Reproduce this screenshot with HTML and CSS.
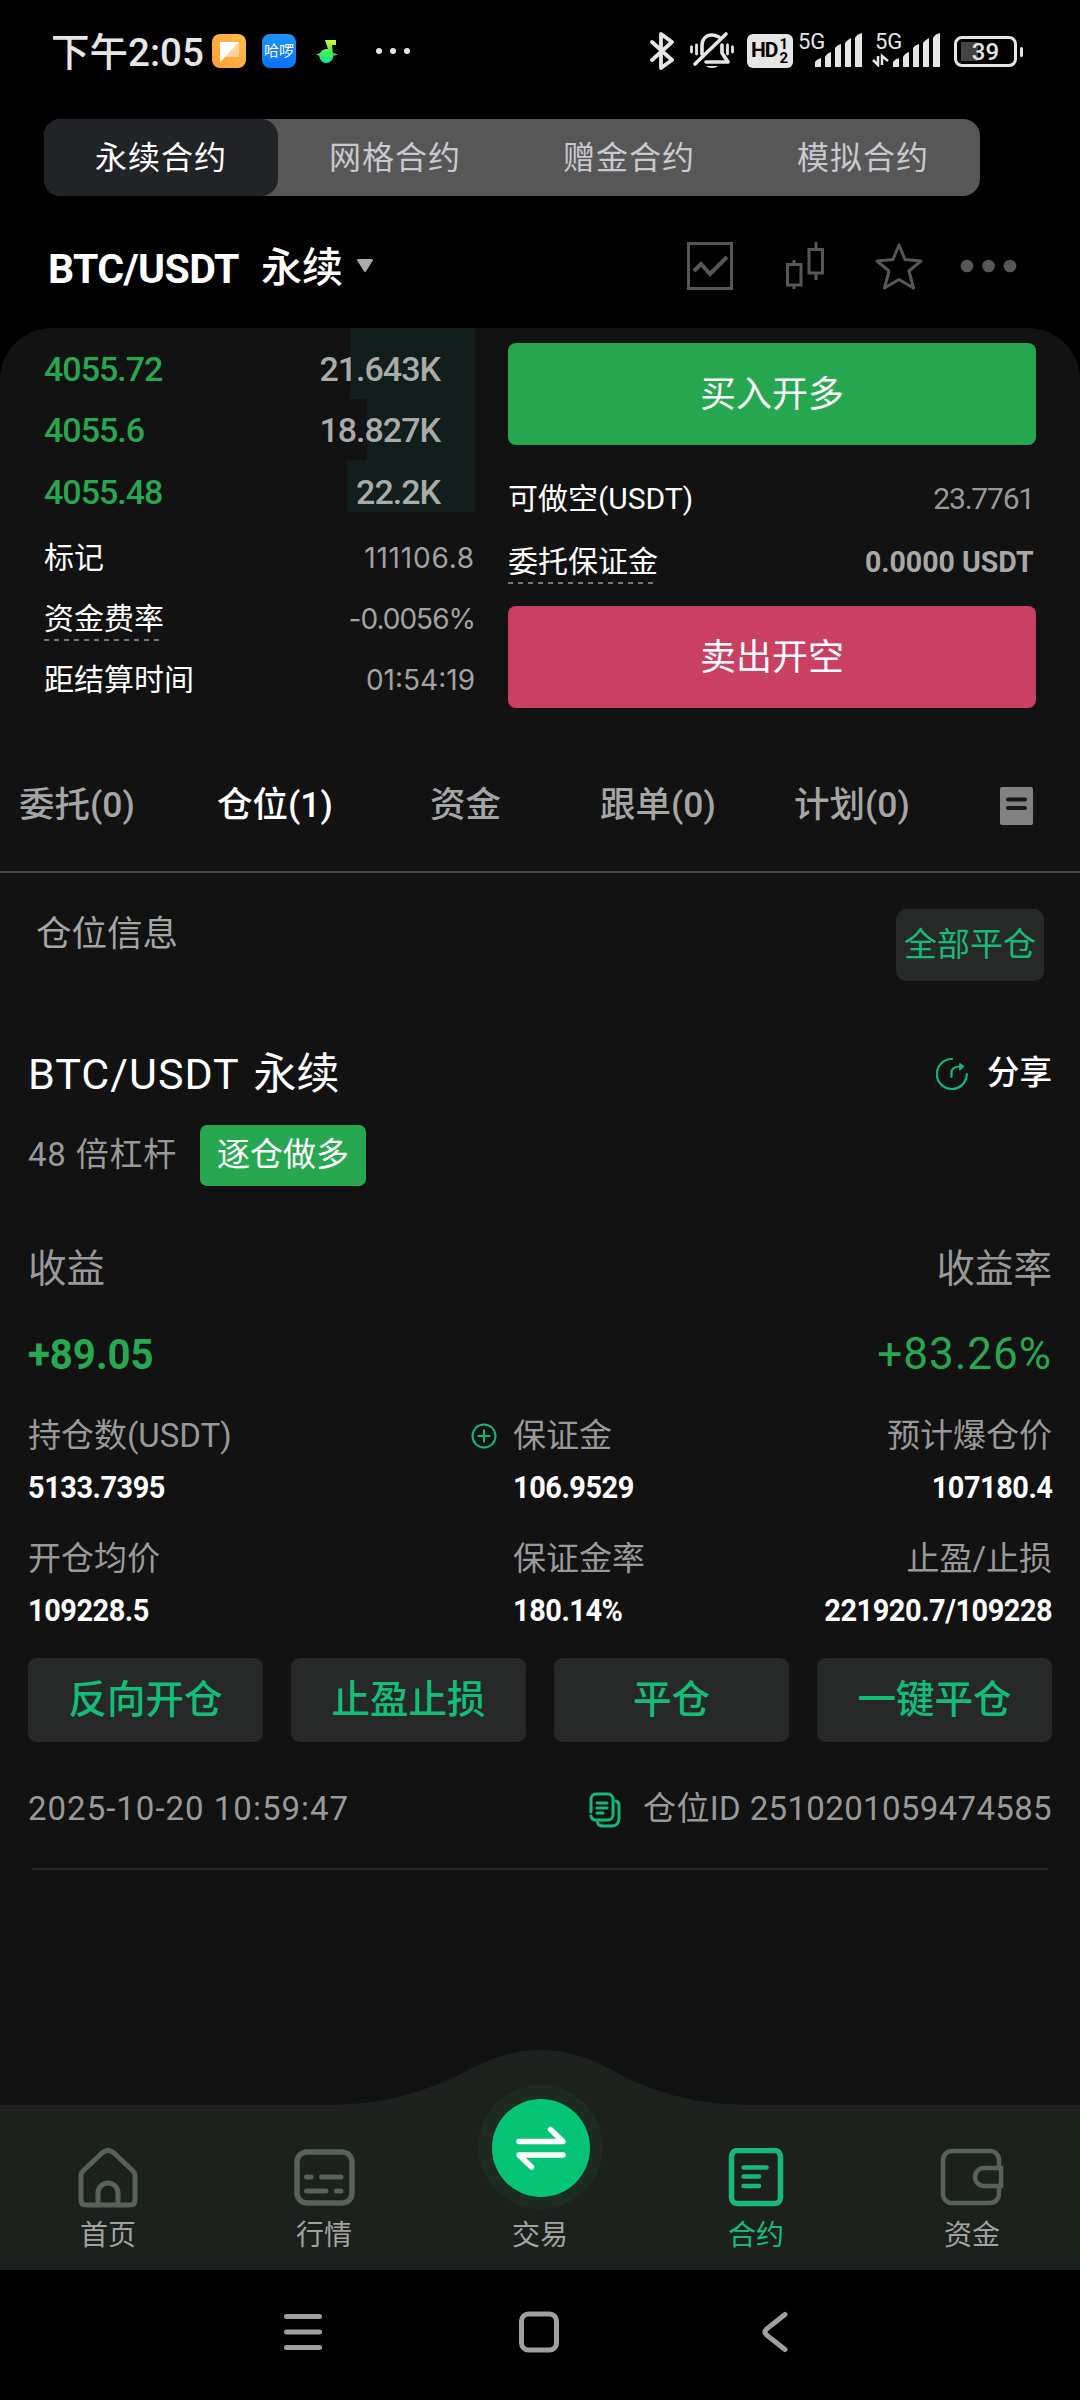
FILE: index.html
```html
<!DOCTYPE html>
<html lang="zh-CN">
<head>
  <meta charset="UTF-8" />
  <meta name="viewport" content="width=device-width, initial-scale=1.0" />
  <title>BTC/USDT 永续</title>
  <link rel="stylesheet" href="styles.css">
</head>
<body>
  <header class="status">
    <span class="clock">下午2:05</span>
    <svg class="app-icon" width="34" height="34" viewBox="0 0 34 34">
      <defs><linearGradient id="orange" x1="1" y1="0" x2="0" y2="1"><stop offset="0" stop-color="#ffc04a"/><stop offset="1" stop-color="#ff9d3c"/></linearGradient></defs>
      <rect width="34" height="34" rx="8" fill="url(#orange)"/>
      <path d="M8 8H27V23H13L8 28Z" fill="#ffd49b"/>
      <path d="M8 8H27L8 28Z" fill="#fff"/>
    </svg>
    <span class="app-icon hello">哈啰</span>
    <svg class="app-note" width="22" height="24" viewBox="0 0 22 24">
      <defs><linearGradient id="note" x1="0" y1="0" x2="0" y2="1"><stop offset="0" stop-color="#d8f535"/><stop offset="0.5" stop-color="#4df04c"/><stop offset="1" stop-color="#05e69a"/></linearGradient></defs>
      <path d="M9 1H20V6H16L17 15A7 7 0 1 1 10 10L12 10ZM0 15.500L4 14V17ZM22 15.500L17 14V17Z" fill="url(#note)"/>
    </svg>
    <svg width="36" height="8" viewBox="0 0 36 8" fill="#e6e6e6"><circle cx="5" cy="4" r="3"/><circle cx="19" cy="4" r="3"/><circle cx="33" cy="4" r="3"/></svg>
    <div class="status-right">
      <svg width="24" height="40" viewBox="0 0 24 40" fill="none" stroke="#e6e6e6" stroke-width="3.800" stroke-linejoin="round" stroke-linecap="round"><path d="M2 11L22 29L11 37V3L22 11L2 29"/></svg>
      <svg class="bell" width="44" height="40" viewBox="0 0 44 40" fill="none" stroke="#e6e6e6" stroke-width="3.600" stroke-linecap="round" stroke-linejoin="round">
        <path d="M12 23V15C12 8 16 4 22 4C25 4 27 5 29 6M32 14V22L38 31H16"/>
        <path d="M36 3L5 33"/>
        <path d="M1.500 16V21M6.500 14V23M42.500 16V21M37.500 14V23" stroke-width="2.800"/>
        <path d="M16 35H28A7 4 0 0 1 16 35Z" fill="#e6e6e6" stroke="none"/>
      </svg>
      <span class="hd">HD<span class="hd-num"><i>1</i><i>2</i></span></span>
      <span class="signal">
        <span class="net">5G</span>
        <svg width="64" height="36" viewBox="0 0 64 36" fill="#e6e6e6"><path d="M17 36V31Q19 28 23 27V36ZM27 36V26Q29 22 33 21V36ZM37 36V17Q39 14 43 13V36ZM47 36V12Q49 9 53 7V36ZM57 36V7Q59 3 64 2V36Z"/></svg>
      </span>
      <span class="signal second">
        <span class="net">5G</span>
        <svg width="68" height="36" viewBox="-4 0 68 36" fill="#e6e6e6"><path d="M17 36V31Q19 28 23 27V36ZM27 36V26Q29 22 33 21V36ZM37 36V17Q39 14 43 13V36ZM47 36V12Q49 9 53 7V36ZM57 36V7Q59 3 64 2V36Z"/><path d="M-3 29L2 34V25M6 34V25L12 30" fill="none" stroke="#e6e6e6" stroke-width="2.500"/></svg>
      </span>
      <span class="battery"><span>39</span></span>
    </div>
  </header>

  <nav class="segments">
    <a class="active">永续合约</a><a>网格合约</a><a>赠金合约</a><a>模拟合约</a>
  </nav>

  <div class="pair-bar">
    <h1><span class="din pair-name">BTC/USDT</span><span class="pair-type">永续</span></h1>
    <svg class="caret" width="18" height="14" viewBox="0 0 18 14"><path d="M2 1H16L9 12Z" fill="#aaa" stroke="#aaa" stroke-width="2" stroke-linejoin="round"/></svg>
    <div class="tools">
      <svg width="46" height="48" viewBox="0 0 46 48" fill="none" stroke="#575757" stroke-width="3"><path d="M1.500 1.500H44.500V46.500H1.500Z"/><path d="M7 29L14 22L23 32L40 15" stroke-width="4"/></svg>
      <svg class="candles" width="38" height="48" viewBox="0 0 38 48" fill="none" stroke="#575757" stroke-width="3"><path d="M1.500 22.500H15V43H1.500ZM8 18V22M8 43V47M23 7.500H36.500V31H23ZM30 0V7M30 31V38"/></svg>
      <svg class="star" width="48" height="48" viewBox="0 0 48 48" fill="none" stroke="#575757" stroke-width="3" stroke-linejoin="round"><path d="M24 3L30 17.500L46 19L34 29L38.500 46L24 37.500L9.500 46L14 29L2 19L18 17.500Z"/></svg>
      <svg width="58" height="14" viewBox="0 0 58 14" fill="#575757"><circle cx="8" cy="7" r="6.300"/><circle cx="29.500" cy="7" r="6.300"/><circle cx="51" cy="7" r="6.300"/></svg>
    </div>
  </div>

  <main>
    <section class="trade">
      <div class="book">
        <div class="ask first"><b class="depth" style="width:125px"></b><span>4055.72</span><span>21.643K</span></div>
        <div class="ask"><b class="depth" style="width:108px"></b><span>4055.6</span><span>18.827K</span></div>
        <div class="ask last"><b class="depth" style="width:128px"></b><span>4055.48</span><span>22.2K</span></div>
        <div class="info"><span>标记</span><span class="wide v1">111106.8</span></div>
        <div class="info"><span class="dashed">资金费率</span><span class="wide v2">-0.0056%</span></div>
        <div class="info"><span>距结算时间</span><span class="wide v3">01:54:19</span></div>
      </div>
      <div class="order">
        <button class="buy">买入开多</button>
        <div class="avail"><span>可做空(USDT)</span><span class="num">23.7761</span></div>
        <div class="margin"><span class="dashed">委托保证金</span><span class="din num">0.0000 USDT</span></div>
        <button class="sell">卖出开空</button>
      </div>
    </section>

    <nav class="tabs">
      <a>委托(0)</a>
      <a class="active">仓位(1)</a>
      <a>资金</a>
      <a>跟单(0)</a>
      <a>计划(0)</a>
      <svg width="34" height="38" viewBox="0 0 34 38"><rect width="33" height="38" rx="2" fill="#828282"/><path d="M8 12.500H25M8 21H25" stroke="#171717" stroke-width="4" stroke-linecap="round"/></svg>
    </nav>

    <div class="list-head">
      <span>仓位信息</span>
      <button>全部平仓</button>
    </div>

    <section class="position">
      <div class="title">
        <h2><span>BTC/USDT</span> 永续</h2>
        <a class="share">
          <svg width="32" height="34" viewBox="0 0 32 34" fill="none" stroke="#13b877" stroke-width="2.200" stroke-linecap="round"><path d="M16 2A15 15 0 1 0 30.800 17"/><path d="M15.500 20V16C15.500 12 18 9.500 24 9.500"/><path d="M24 6.500L28 9.500L24 13Z" fill="#13b877" stroke-width="1"/></svg>
          分享
        </a>
      </div>
      <div class="leverage"><span>48 倍杠杆</span><b>逐仓做多</b></div>
      <div class="pnl-label"><span>收益</span><span>收益率</span></div>
      <div class="pnl"><span class="din">+89.05</span><span class="rate">+83.26%</span></div>
      <div class="stats">
        <div><label>持仓数<i>(USDT)</i></label><b>5133.7395</b></div>
        <div class="mid">
          <svg class="add" width="26" height="26" viewBox="0 0 26 26" fill="none" stroke="#13b877" stroke-width="2"><circle cx="13" cy="13" r="11.500"/><path d="M13 6.500V19.500M6.500 13H19.500"/></svg>
          <label>保证金</label><b>106.9529</b>
        </div>
        <div class="end"><label>预计爆仓价</label><b>107180.4</b></div>
        <div><label>开仓均价</label><b>109228.5</b></div>
        <div class="mid"><label>保证金率</label><b>180.14%</b></div>
        <div class="end"><label>止盈/止损</label><b>221920.7/109228</b></div>
      </div>
      <div class="actions">
        <button>反向开仓</button>
        <button>止盈止损</button>
        <button>平仓</button>
        <button>一键平仓</button>
      </div>
      <div class="meta">
        <time>2025-10-20 10:59:47</time>
        <span class="pid">
          <svg width="32" height="36" viewBox="0 0 32 36" fill="none" stroke="#13b877" stroke-width="3" stroke-linecap="round"><path d="M2 20V7A5 5 0 0 1 7 2H19A5 5 0 0 1 24 7V23A5 5 0 0 1 19 28H7A5 5 0 0 1 2 24"/><path d="M8 11H18M8 16H18M8 21H14"/><path d="M27 9Q30 10 30 14V27A7 7 0 0 1 23 34H14Q9 34 8.500 30"/></svg>
          <span>仓位ID <em>2510201059474585</em></span>
        </span>
      </div>
    </section>
  </main>

  <footer class="tabbar">
    <svg class="bump" width="1080" height="220" viewBox="0 0 1080 220">
      <path d="M0 55H330C380 54 415 45 455 27C480 14 505 0 540 0C575 0 600 13 625 27C665 46 700 54 750 55H1080V220H0Z" fill="#1d211d"/>
      <circle cx="540.500" cy="97" r="62" fill="#1d2b20"/>
    </svg>
    <a>
      <svg width="60" height="60" viewBox="0 0 60 60" fill="none" stroke="#566356" stroke-width="5"><path d="M3 27Q3 25 5 23L24 5Q30 0 36 5L55 23Q57 25 57 27V52Q57 57 52 57H8Q3 57 3 52Z"/><path d="M20 57V45A10 10 0 0 1 40 45V57"/></svg>
      首页
    </a>
    <a>
      <svg width="62" height="60" viewBox="0 0 62 60" fill="none" stroke="#566356" stroke-width="5.500"><rect x="4" y="4" width="55" height="51" rx="10"/><path d="M13.500 29H18M28.500 29H48M13.500 43H33M43.500 43H48" stroke-linecap="round" stroke-width="5"/></svg>
      行情
    </a>
    <a>
      <svg class="swap" width="98" height="98" viewBox="0 0 98 98"><circle cx="49" cy="49" r="49" fill="#06c475"/><path d="M27 42.500H71L58.500 30.500M71 56H27L39.500 68" fill="none" stroke="#fff" stroke-width="5.500" stroke-linecap="round" stroke-linejoin="round"/></svg>
      交易
    </a>
    <a class="active">
      <svg width="56" height="60" viewBox="0 0 56 60" fill="none" stroke="#18b978" stroke-width="5.500"><rect x="3.500" y="2.500" width="49" height="53" rx="6"/><path d="M15.500 19.500H38.500M15.500 28.500H31M15.500 38H31" stroke-linecap="round" stroke-width="4.500"/></svg>
      合约
    </a>
    <a>
      <svg width="64" height="60" viewBox="0 0 64 60" fill="none" stroke="#566356" stroke-width="4.500"><path d="M59 20V12A9 9 0 0 0 50 3H12A9 9 0 0 0 3 12V46A9 9 0 0 0 12 55H50A9 9 0 0 0 59 46V38"/><path d="M61 20H44A8.500 8.500 0 0 0 44 38H61Z"/></svg>
      资金
    </a>
  </footer>

  <div class="sysnav">
    <svg width="40" height="40" viewBox="0 0 40 40" stroke="#a0a0a0" stroke-width="5" stroke-linecap="round"><path d="M3.500 4.500H36.500M3.500 20H36.500M3.500 35.500H36.500"/></svg>
    <svg width="40" height="42" viewBox="0 0 40 42" fill="none" stroke="#a0a0a0" stroke-width="5"><rect x="2.500" y="3" width="35" height="36" rx="7"/></svg>
    <svg width="40" height="42" viewBox="0 0 40 42" fill="none" stroke="#a0a0a0" stroke-width="5" stroke-linecap="round"><path d="M30 3.500L11.500 18Q8.500 21 11.500 24L30 38.500"/></svg>
  </div>
</body>
</html>
```
FILE: styles.css
```css
* {
  box-sizing: border-box;
}
body {
  margin: 0;
  width: 1080px;
  height: 2400px;
  overflow: hidden;
  background: #000;
  color: #fff;
  display: flex;
  flex-direction: column;
  font-family: Roboto, "Noto Sans CJK SC", sans-serif;
  font-size: 33px;
  line-height: 1.4;
  white-space: nowrap;
}
h1, h2 {
  margin: 0;
  font-weight: 500;
}
button {
  border: none;
  padding: 0;
  color: #fff;
  font-family: inherit;
}
svg {
  display: block;
  flex: none;
}
i, em {
  font-style: normal;
}
.din {
  font-weight: 700;
}

/* status bar */
.status {
  height: 119px;
  padding: 0 63px 17px 51px;
  display: flex;
  align-items: center;
  color: #e6e6e6;
}
.clock {
  width: 161px;
  padding-top: 3px;
  font-size: 38.500px;
  font-weight: 500;
}
.app-icon {
  margin-right: 16px;
}
.hello {
  width: 34px;
  height: 34px;
  border-radius: 8px;
  background: linear-gradient(#1c94fb, #0a72fa);
  color: #fff;
  font-size: 15px;
  line-height: 34px;
  text-align: center;
}
.app-note {
  margin: 0 36px 0 4px;
}
.status-right {
  margin-left: auto;
  display: flex;
  align-items: center;
}
.bell {
  margin: 0 13px 0 16px;
}
.hd {
  width: 46px;
  height: 34px;
  padding-left: 4px;
  border-radius: 6px;
  background: #e6e6e6;
  color: #000;
  font-size: 21px;
  font-weight: 700;
  letter-spacing: -1px;
  display: flex;
  align-items: center;
}
.hd-num {
  display: flex;
  flex-direction: column;
  font-size: 15px;
  line-height: 14px;
  margin-left: 2px;
}
.hd-num i {
  height: 14px;
}
.signal {
  position: relative;
  width: 64px;
  margin-left: 5px;
}
.signal.second {
  width: 68px;
  margin-left: 10px;
}
.net {
  position: absolute;
  top: -1px;
  left: 0;
  font-size: 22px;
  line-height: 24px;
}
.signal.second .net {
  left: 3px;
}
.signal svg {
  margin-bottom: 5px;
}
.battery {
  position: relative;
  width: 63px;
  height: 31px;
  margin-left: 14px;
  border: 3px solid #e6e6e6;
  border-radius: 8px;
  background: linear-gradient(90deg, #444 17px, transparent 17px) 4px 3px no-repeat;
  background-size: 50px 19px;
  font-size: 24px;
  font-weight: 500;
  line-height: 26px;
  text-align: center;
}
.battery::after {
  content: "";
  position: absolute;
  right: -9px;
  top: 8px;
  width: 3px;
  height: 10px;
  border-radius: 2px;
  background: #e6e6e6;
}

/* contract type switch */
.segments {
  width: 936px;
  height: 77px;
  margin-left: 44px;
  border-radius: 17px;
  background: #575757;
  color: #c8c8ce;
  display: flex;
  font-size: 32px;
  letter-spacing: 1px;
  line-height: 78px;
  text-align: center;
}
.segments a {
  flex: 1;
}
.segments .active {
  border-radius: 17px;
  background: #222327;
  color: #fff;
}

.pair-bar {
  height: 132px;
  padding: 8px 63px 0 48px;
  display: flex;
  align-items: center;
}
.pair-bar h1 {
  padding-top: 3px;
  display: flex;
  align-items: center;
  font-size: 41px;
  line-height: 60px;
}
.pair-name {
  width: 213px;
  padding-top: 2px;
  letter-spacing: -0.6px;
}
.caret {
  margin-left: 13px;
}
.tools {
  margin-left: auto;
  display: flex;
  align-items: center;
}
.candles {
  margin: 0 51px 0 53px;
}
.star {
  margin-right: 36px;
}

main {
  height: 1777px;
  background: #121212;
  border-radius: 52px 52px 0 0;
}

/* order book and order buttons */
.trade {
  height: 412px;
  padding: 0 44px;
  display: flex;
  gap: 33px;
}
.book {
  width: 431px;
}
.ask {
  position: relative;
  height: 61px;
  padding-right: 35px;
  display: flex;
  justify-content: space-between;
  align-items: center;
  color: #a9abaa;
  font-size: 34px;
  font-weight: 500;
  letter-spacing: -1px;
  line-height: 64px;
}
.ask.first {
  height: 71px;
  padding-top: 11px;
}
.ask.last {
  height: 52px;
  align-items: flex-start;
}
.ask span {
  position: relative;
}
.ask span:nth-child(2) {
  color: #27a850;
}
.depth {
  position: absolute;
  top: 0;
  right: 0;
  bottom: 0;
  background: #111e1b;
}
.ask.last + .info {
  margin-top: 15px;
}
.info {
  height: 61px;
  display: flex;
  justify-content: space-between;
  align-items: center;
  font-size: 30px;
  line-height: 44px;
}
.info .wide {
  color: #a2a2a2;
  font-family: Inter, sans-serif;
  font-size: 28px;
}
.v1 {
  letter-spacing: 0.8px;
}
.v2 {
  letter-spacing: -1px;
}
.v3 {
  letter-spacing: 0;
}
.dashed {
  background: repeating-linear-gradient(90deg, #777 0 5px, transparent 5px 10px) 0 100% / 100% 2px no-repeat;
}
.order {
  width: 528px;
  padding-top: 15px;
}
.buy, .sell {
  display: block;
  width: 528px;
  height: 102px;
  border-radius: 8px;
  background: #27a850;
  font-size: 36px;
  line-height: 104px;
}
.sell {
  background: #c94063;
}
.avail, .margin {
  display: flex;
  justify-content: space-between;
  align-items: center;
  height: 63px;
  padding-right: 2px;
  font-size: 30px;
  line-height: 44px;
}
.avail {
  margin-top: 22px;
}
.margin {
  margin-bottom: 13px;
}
.order .num {
  color: #999;
  letter-spacing: -1.2px;
}
.order .din {
  color: #a8a8a8;
  letter-spacing: 0;
  transform: scaleX(0.95);
  transform-origin: right;
}

/* tabs */
.tabs {
  height: 133px;
  padding: 0 46px 0 19px;
  border-bottom: 2px solid #484848;
  display: flex;
  align-items: center;
  color: #a5a5a5;
  font-size: 35.500px;
  font-weight: 500;
}
.tabs a:nth-child(1) { width: 198px; }
.tabs a:nth-child(2) { width: 213px; }
.tabs a:nth-child(3) { width: 170px; }
.tabs a:nth-child(4) { width: 194px; }
.tabs a:nth-child(5) { width: 206px; }
.tabs .active {
  color: #fff;
}

.list-head {
  height: 147px;
  padding: 36px 36px 0;
  display: flex;
  justify-content: space-between;
  color: #a5a5a5;
  font-size: 35.500px;
  line-height: 50px;
}
.list-head button {
  width: 148px;
  height: 72px;
  border-radius: 10px;
  background: #272928;
  color: #18b978;
  font-size: 33px;
  line-height: 72px;
}

/* position card */
.position {
  width: 1024px;
  margin-left: 28px;
}
.position::after {
  content: "";
  display: block;
  height: 2px;
  margin: 0 4px;
  background: #232423;
}
.title {
  height: 105px;
  padding-top: 3px;
  display: flex;
  justify-content: space-between;
  align-items: center;
}
.title h2 {
  font-size: 43px;
  font-weight: 400;
  word-spacing: 3px;
}
.title h2 span {
  letter-spacing: 1px;
}
.share {
  display: flex;
  align-items: center;
  gap: 19px;
  font-size: 32.500px;
  font-weight: 500;
}
.leverage {
  height: 61px;
  margin-bottom: 51px;
  display: flex;
  align-items: center;
  color: #999;
}
.leverage span {
  width: 172px;
  letter-spacing: 0.8px;
}
.leverage b {
  width: 166px;
  height: 61px;
  border-radius: 7px;
  background: #27a850;
  color: #fff;
  font-size: 33px;
  font-weight: 400;
  line-height: 60px;
  text-align: center;
}
.pnl-label, .pnl {
  display: flex;
  justify-content: space-between;
  align-items: center;
}
.pnl-label {
  height: 64px;
  color: #999;
  font-size: 38.500px;
}
.pnl {
  height: 108px;
  color: #27a850;
  font-size: 42px;
}
.pnl .din {
  transform: scaleX(0.955);
  transform-origin: left;
}
.rate {
  font-size: 44px;
  letter-spacing: 1px;
}
.stats {
  display: grid;
  grid-template-columns: 485px 220px 319px;
  grid-auto-rows: 123px;
  margin-bottom: 3px;
}
.stats div {
  position: relative;
  display: flex;
  flex-direction: column;
  align-items: flex-start;
}
.stats .end {
  align-items: flex-end;
}
.stats label {
  color: #999;
  font-size: 33px;
  line-height: 54px;
}
.stats b {
  font-size: 31px;
  line-height: 50px;
  letter-spacing: -0.5px;
  transform: scaleX(0.933);
  transform-origin: left;
}
.stats .end b {
  transform-origin: right;
}
.add {
  position: absolute;
  left: -42px;
  top: 14px;
}
.actions {
  display: flex;
  gap: 28px;
}
.actions button {
  flex: 1;
  height: 84px;
  border-radius: 9px;
  background: #272928;
  color: #12bd78;
  font-size: 38.500px;
  font-weight: 500;
  line-height: 84px;
}
.meta {
  height: 126px;
  padding-top: 9px;
  display: flex;
  justify-content: space-between;
  align-items: center;
  color: #999;
  font-size: 33px;
}
.meta time {
  letter-spacing: 1px;
}
.pid {
  display: flex;
  align-items: center;
  gap: 22px;
  letter-spacing: 0.35px;
}

/* bottom bar */
.tabbar {
  position: relative;
  height: 165px;
  display: flex;
  color: #a0a3a0;
  font-size: 28px;
  line-height: 40px;
}
.bump {
  position: absolute;
  left: 0;
  bottom: 0;
}
.tabbar a {
  position: relative;
  flex: 1;
  height: 151px;
  display: flex;
  flex-direction: column;
  align-items: center;
  justify-content: flex-end;
}
.tabbar a svg {
  margin-bottom: 8px;
}
.tabbar a .swap {
  margin: 0 0 19px 2px;
}
.tabbar .active {
  color: #18b978;
}

.sysnav {
  height: 130px;
  padding: 0 285px 6px 283px;
  display: flex;
  justify-content: space-between;
  align-items: center;
}
```
